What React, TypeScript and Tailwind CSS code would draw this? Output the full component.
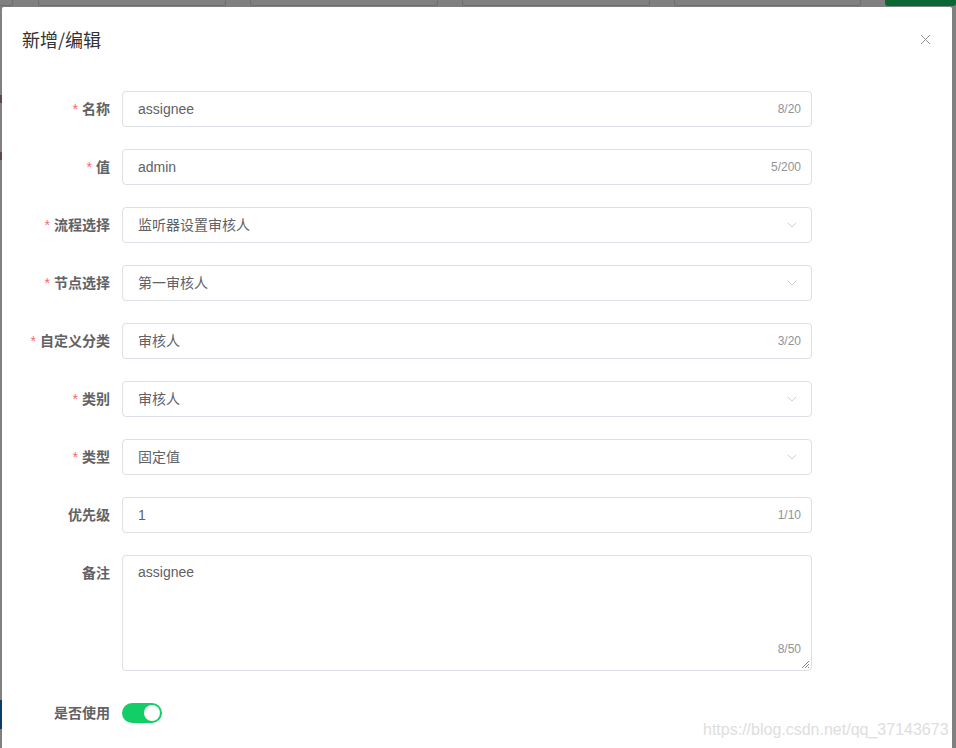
import { X, ChevronDown } from "lucide-react";

type Row = {
  label: string;
  required?: boolean;
  value: string;
  kind: "input" | "select";
  count?: string;
};

const rows: Row[] = [
  { label: "名称", required: true, value: "assignee", kind: "input", count: "8/20" },
  { label: "值", required: true, value: "admin", kind: "input", count: "5/200" },
  { label: "流程选择", required: true, value: "监听器设置审核人", kind: "select" },
  { label: "节点选择", required: true, value: "第一审核人", kind: "select" },
  { label: "自定义分类", required: true, value: "审核人", kind: "input", count: "3/20" },
  { label: "类别", required: true, value: "审核人", kind: "select" },
  { label: "类型", required: true, value: "固定值", kind: "select" },
  { label: "优先级", value: "1", kind: "input", count: "1/10" },
];

function Label({ text, required }: { text: string; required?: boolean }) {
  return (
    <label className="w-[100px] shrink-0 pr-[12px] text-right text-[14px] font-bold text-[#606266] leading-[36px]">
      {required && <span className="text-[#f56c6c] mr-[4px] font-normal">*</span>}
      {text}
    </label>
  );
}

export default function App() {
  return (
    <div
      className="relative w-[956px] h-[748px] overflow-hidden bg-[#808080] pt-[7px] pl-[2px] pr-[4px]"
      style={{ fontFamily: '"Liberation Sans", "Noto Sans CJK SC", sans-serif' }}
    >
      {/* page behind the overlay */}
      <div className="absolute top-0 left-0 right-0 h-[7px]">
        <div className="absolute top-0 left-0 w-[13px] h-[6px] border-r border-b border-[#6e6e6e] rounded-br-[3px]" />
        <div className="absolute top-0 left-[38px] w-[188px] h-[6px] border-x border-b border-[#6e6e6e] rounded-b-[3px]" />
        <div className="absolute top-0 left-[250px] w-[188px] h-[6px] border-x border-b border-[#6e6e6e] rounded-b-[3px]" />
        <div className="absolute top-0 left-[462px] w-[188px] h-[6px] border-x border-b border-[#6e6e6e] rounded-b-[3px]" />
        <div className="absolute top-0 left-[674px] w-[187px] h-[6px] border-x border-b border-[#6e6e6e] rounded-b-[3px]" />
        <div className="absolute top-0 left-[885px] w-[71px] h-[6px] bg-[#0a6733] rounded-b-[3px]" />
      </div>
      <div className="absolute left-0 top-[95px] w-[2px] h-[8px] bg-[#5a4a4e]" />
      <div className="absolute left-0 top-[152px] w-[2px] h-[8px] bg-[#5a4a4e]" />
      <div className="absolute left-0 top-[700px] w-[2px] h-[29px] bg-[#0b3d6b]" />

      <div className="relative bg-white h-[760px] rounded-t-[2px]">
        <div className="flex items-center justify-between px-[20px] pt-[20px] pb-[10px]">
          <span className="text-[18px] leading-[24px] text-[#303133]" style={{ fontFamily: '"Noto Sans CJK SC", sans-serif' }}>
            新增/编辑
          </span>
          <X className="w-[17px] h-[17px] text-[#909399] mr-[-2px]" strokeWidth={1.4} />
        </div>

        <div className="px-[20px] pt-[30px] flex flex-col gap-[22px]">
          {rows.map((r) => (
            <div key={r.label} className="flex items-center">
              <Label text={r.label} required={r.required} />
              <div className="w-[690px] h-[36px] border border-[#dcdfe6] rounded-[4px] flex items-center pl-[15px] pr-[9px]">
                <span className="flex-1 text-[14px] text-[#606266]">{r.value}</span>
                {r.kind === "input" ? (
                  <span className="text-[12px] text-[#909399] pr-[1px]">{r.count}</span>
                ) : (
                  <ChevronDown className="w-[16px] h-[16px] text-[#c0c4cc] mr-[2px]" strokeWidth={1.2} />
                )}
              </div>
            </div>
          ))}

          <div className="flex items-start">
            <Label text="备注" />
            <div className="relative w-[690px] h-[116px] border border-[#dcdfe6] rounded-[4px] pl-[15px] pt-[4px]">
              <span className="text-[14px] text-[#606266] leading-[20px]">assignee</span>
              <span className="absolute right-[10px] bottom-[12px] text-[12px] text-[#909399]">8/50</span>
              <svg className="absolute right-[1px] bottom-[1px]" width="9" height="9" viewBox="0 0 9 9">
                <path d="M8 1 L1 8 M8 4 L4 8 M8 7 L7 8" stroke="#8a8a8a" strokeWidth="1" />
              </svg>
            </div>
          </div>

          <div className="flex items-center h-[40px]">
            <label className="w-[100px] shrink-0 pr-[12px] text-right text-[14px] font-bold text-[#606266]">
              是否使用
            </label>
            <div className="relative w-[40px] h-[20px] rounded-full bg-[#13ce66]">
              <span className="absolute right-[2px] top-[2px] w-[16px] h-[16px] rounded-full bg-white" />
            </div>
          </div>
        </div>
      </div>

      <span className="absolute left-[703px] top-[718px] text-[16px] text-[#dedede]">
        https://blog.csdn.net/qq_37143673
      </span>
    </div>
  );
}
